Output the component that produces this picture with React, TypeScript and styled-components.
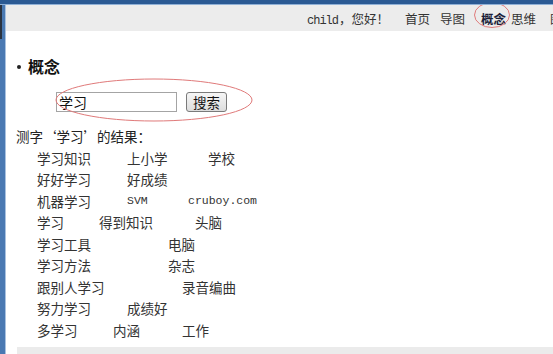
import React from 'react';
import styled, { createGlobalStyle } from 'styled-components';

const CJK = `"Noto Sans CJK SC", "Noto Sans", sans-serif`;
const MONO = `"Liberation Mono", "DejaVu Sans Mono", monospace`;

type Word = { text: string; w?: number; mono?: boolean };

const results: Word[][] = [
  [{ text: '学习知识', w: 90 }, { text: '上小学', w: 81 }, { text: '学校' }],
  [{ text: '好好学习', w: 90 }, { text: '好成绩' }],
  [{ text: '机器学习', w: 90 }, { text: 'SVM', w: 61, mono: true }, { text: 'cruboy.com', mono: true }],
  [{ text: '学习', w: 62 }, { text: '得到知识', w: 96 }, { text: '头脑' }],
  [{ text: '学习工具', w: 131 }, { text: '电脑' }],
  [{ text: '学习方法', w: 131 }, { text: '杂志' }],
  [{ text: '跟别人学习', w: 145 }, { text: '录音编曲' }],
  [{ text: '努力学习', w: 90 }, { text: '成绩好' }],
  [{ text: '多学习', w: 76 }, { text: '内涵', w: 69 }, { text: '工作' }],
];

const navLinks = [
  { text: '首页', ml: 16 },
  { text: '导图', ml: 10 },
  { text: '概念', ml: 16, active: true },
  { text: '思维', ml: 5 },
  { text: '图', ml: 14 },
];

const App = () => {
  return (
    <>
      <GlobalStyle />
      <Frame>
        <TopEdge />
        <Body>
          <LeftEdge />
          <Page>
            <Header>
              <Greeting>
                <Latin>child</Latin>，您好！
              </Greeting>
              {navLinks.map((l) => (
                <NavLink key={l.text} $ml={l.ml} $active={!!l.active}>
                  {l.text}
                  {l.active && (
                    <Ring width="38" height="28" viewBox="0 0 38 28" style={{ left: -8, top: -8 }}>
                      <ellipse cx="19" cy="14" rx="17.5" ry="12.5" fill="none" stroke="#e07a7a" strokeWidth="1" />
                    </Ring>
                  )}
                </NavLink>
              ))}
            </Header>

            <Content>
              <Heading>
                <Bullet />
                概念
              </Heading>

              <SearchRow>
                <SearchInput defaultValue="学习" />
                <SearchButton>搜索</SearchButton>
                <Ring width="200" height="44" viewBox="0 0 200 44" style={{ left: -2, top: -14 }}>
                  <ellipse cx="100" cy="22" rx="98" ry="21" fill="none" stroke="#e07a7a" strokeWidth="1" />
                </Ring>
              </SearchRow>

              <ResultTitle>测字‘学习’的结果：</ResultTitle>
              <ResultList>
                {results.map((row, i) => (
                  <ResultRow key={i}>
                    {row.map((w) => (
                      <Item key={w.text} $w={w.w} $mono={!!w.mono}>
                        {w.text}
                      </Item>
                    ))}
                  </ResultRow>
                ))}
              </ResultList>
            </Content>

            <BottomBar />
          </Page>
        </Body>
      </Frame>
    </>
  );
};

export default App;

const GlobalStyle = createGlobalStyle`
  html, body {
    margin: 0;
    padding: 0;
    background: #ffffff;
    overflow: hidden;
  }
`;

const Frame = styled.div`
  width: 553px;
  height: 354px;
  display: flex;
  flex-direction: column;
  overflow: hidden;
  font-family: ${CJK};
  color: #2a2a2a;
`;

const TopEdge = styled.div`
  height: 5px;
  flex-shrink: 0;
  background: linear-gradient(#2b5a93 0 4px, #8fb0d6 4px);
`;

const Body = styled.div`
  flex: 1;
  display: flex;
  min-height: 0;
`;

const LeftEdge = styled.div`
  width: 6px;
  flex-shrink: 0;
  background:
    linear-gradient(to right, #2a3340 0 2px, transparent 2px) top / 100% 34px no-repeat,
    linear-gradient(to right, #4a79b2 0 5px, #a9c2e0 5px);
`;

const Page = styled.div`
  flex: 1;
  display: flex;
  flex-direction: column;
  min-width: 0;
`;

const Header = styled.div`
  height: 25px;
  flex-shrink: 0;
  background: #ececec;
  display: flex;
  align-items: center;
  padding-left: 301px;
  padding-top: 1px;
  white-space: nowrap;
  overflow: hidden;
  font-size: 12.5px;
  color: #333;
`;

const Greeting = styled.span`
  display: inline-flex;
  align-items: baseline;
`;

const Latin = styled.span`
  font-family: ${MONO};
  font-size: 12px;
  letter-spacing: -1px;
  margin-right: 1px;
`;

const NavLink = styled.span<{ $ml: number; $active: boolean }>`
  position: relative;
  margin-left: ${(p) => p.$ml}px;
  font-weight: ${(p) => (p.$active ? 700 : 400)};
  color: ${(p) => (p.$active ? '#1c1f3a' : '#333')};
`;

const Ring = styled.svg`
  position: absolute;
  pointer-events: none;
  overflow: visible;
`;

const Content = styled.div`
  flex: 1;
  padding: 24px 0 0 11px;
`;

const Heading = styled.div`
  display: flex;
  align-items: center;
  height: 22px;
  font-size: 16px;
  font-weight: 700;
  color: #111;
`;

const Bullet = styled.span`
  width: 4px;
  height: 4px;
  border-radius: 50%;
  background: #222;
  margin: 1px 7px 0 0;
`;

const SearchRow = styled.div`
  position: relative;
  display: flex;
  align-items: center;
  gap: 9px;
  margin: 15px 0 0 39px;
  width: max-content;
`;

const SearchInput = styled.input`
  box-sizing: border-box;
  width: 121px;
  height: 20px;
  border: 1px solid #a4a4a4;
  padding: 0 2px;
  font-family: ${CJK};
  font-size: 14px;
  color: #111;
  outline: none;
`;

const SearchButton = styled.button`
  box-sizing: border-box;
  width: 41px;
  height: 20px;
  padding: 0;
  border: 1px solid #7a7a7a;
  border-radius: 3px;
  background: linear-gradient(#f6f6f6, #dddddd);
  font-family: ${CJK};
  font-size: 13.5px;
  line-height: 16px;
  color: #111;
`;

const ResultTitle = styled.div`
  margin: 13px 0 0 -1px;
  height: 22px;
  line-height: 22px;
  font-size: 13.5px;
  color: #222;
`;

const ResultList = styled.div`
  padding-left: 20px;
`;

const ResultRow = styled.div`
  display: flex;
  align-items: center;
  height: 21.5px;
`;

const Item = styled.span<{ $w?: number; $mono: boolean }>`
  flex-shrink: 0;
  width: ${(p) => (p.$w ? `${p.$w}px` : 'auto')};
  font-family: ${(p) => (p.$mono ? MONO : CJK)};
  font-size: ${(p) => (p.$mono ? '11.5px' : '13.5px')};
  color: #333;
  white-space: nowrap;
`;

const BottomBar = styled.div`
  height: 7px;
  flex-shrink: 0;
  margin-left: 11px;
  background: #ebebeb;
`;
